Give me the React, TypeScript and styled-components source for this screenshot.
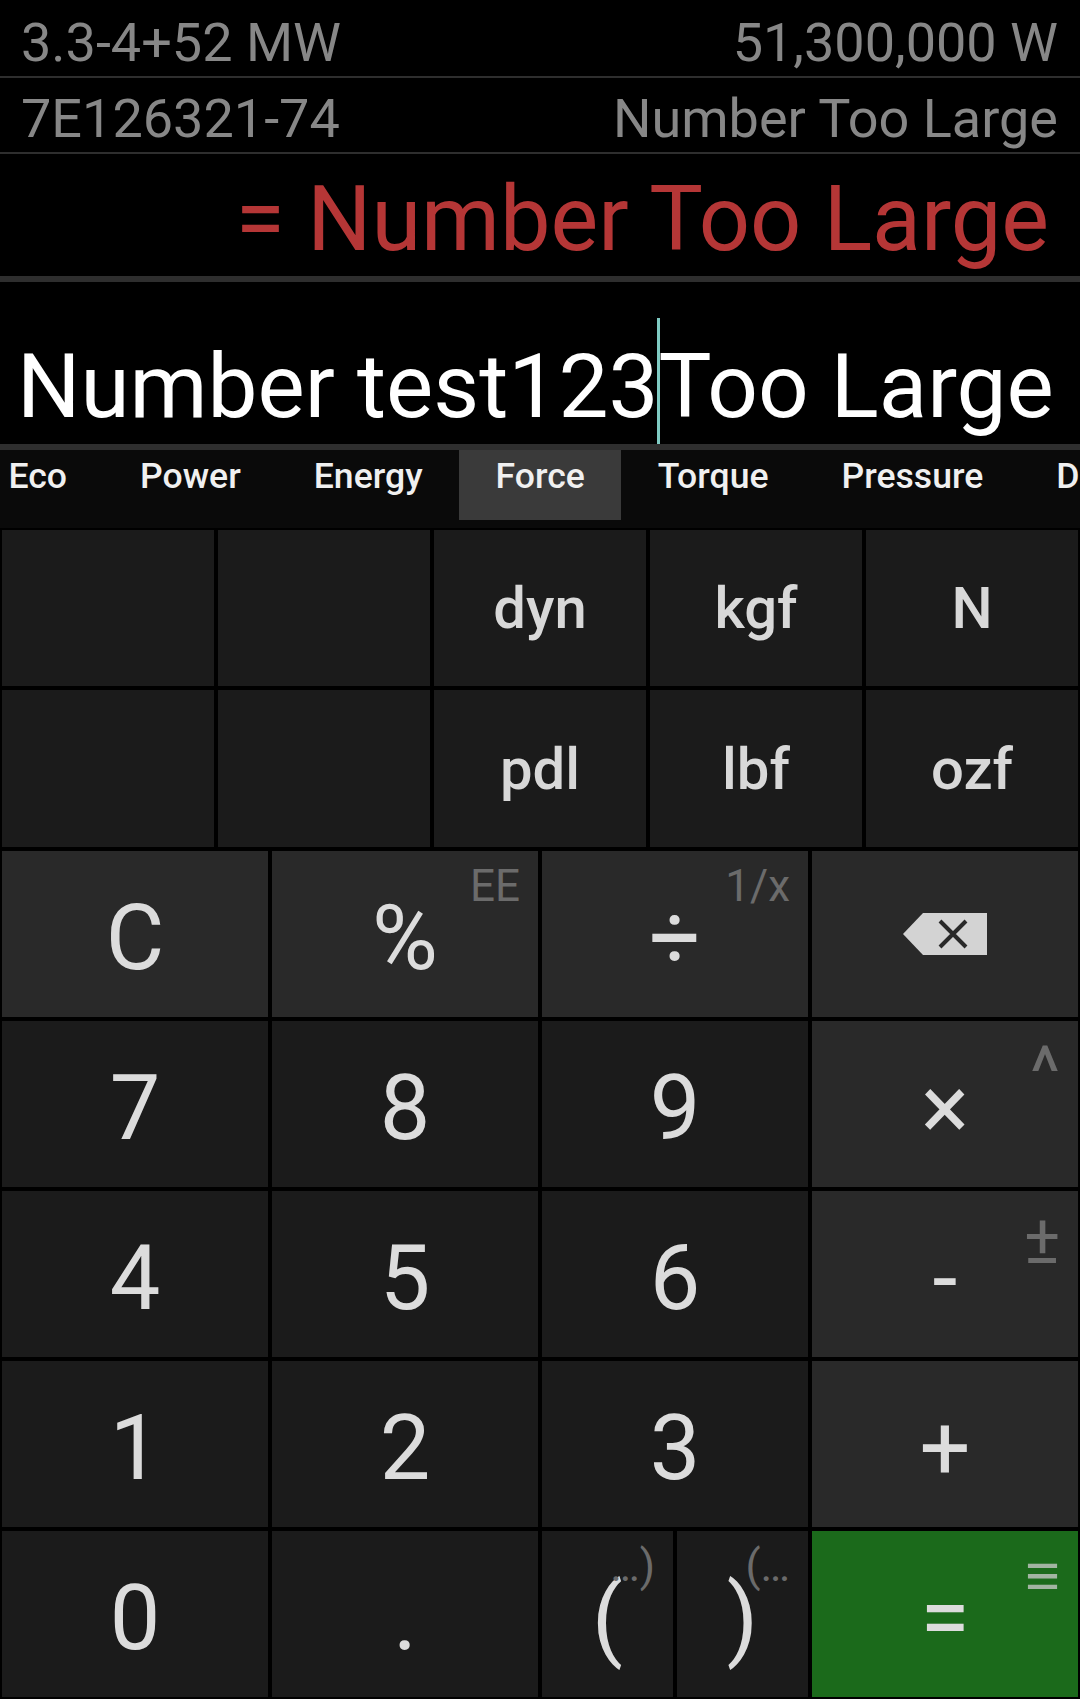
import styled, { createGlobalStyle } from "styled-components";

const GlobalStyle = createGlobalStyle`
  html, body {
    margin: 0;
    padding: 0;
    background: #000;
  }
  body {
    font-family: Roboto, "Noto Sans", "Liberation Sans", sans-serif;
  }
  * {
    box-sizing: border-box;
  }
`;

const Screen = styled.div`
  width: 1080px;
  height: 1699px;
  display: flex;
  flex-direction: column;
  background: #000;
  overflow: hidden;
`;

const HistoryRow = styled.div<{ $h: number; $top: number }>`
  height: ${props => props.$h}px;
  padding: ${props => props.$top}px 22px 0 21px;
  display: flex;
  justify-content: space-between;
  font-size: 54px;
  color: #878787;
  white-space: nowrap;
  flex-shrink: 0;
`;

const Divider = styled.div<{ $thick?: boolean }>`
  height: ${props => (props.$thick ? 6 : 2)}px;
  background: #2e2e2e;
  flex-shrink: 0;
`;

const Result = styled.div`
  height: 122px;
  padding: 13px 31px 0 0;
  text-align: right;
  font-size: 90px;
  color: #b53636;
  white-space: nowrap;
  flex-shrink: 0;
`;

const Input = styled.div`
  height: 162px;
  padding: 52px 0 0 17px;
  font-size: 89px;
  color: #fff;
  white-space: nowrap;
  overflow: hidden;
  flex-shrink: 0;
`;

const Caret = styled.span`
  position: relative;
  &::before {
    content: "";
    position: absolute;
    left: -1px;
    top: -16px;
    width: 3px;
    height: 126px;
    background: #7fcbc3;
  }
`;

const TabBar = styled.div`
  height: 78px;
  background: #0a0a0a;
  overflow: hidden;
  flex-shrink: 0;
`;

const TabStrip = styled.div`
  display: flex;
  margin-left: -28px;
`;

const Tab = styled.div<{ $active?: boolean }>`
  height: 70px;
  padding: 5px 36.5px 0;
  font-size: 35.6px;
  font-weight: 500;
  color: #f0f0f0;
  background: ${props => (props.$active ? "#3a3a3a" : "transparent")};
  white-space: nowrap;
  flex-shrink: 0;
`;

const Keypad = styled.div`
  flex: 1;
  min-height: 0;
  display: flex;
  flex-direction: column;
  gap: 4px;
  padding: 2px;
`;

const UnitGrid = styled.div`
  display: grid;
  grid-template-columns: repeat(5, 1fr);
  grid-template-rows: 156px 157px;
  gap: 4px;
`;

const UnitKey = styled.div`
  background: #1b1b1b;
  display: flex;
  align-items: center;
  justify-content: center;
  font-size: 58px;
  font-weight: 500;
  color: #d8d8d8;
`;

const MainGrid = styled.div`
  flex: 1;
  display: grid;
  grid-template-columns: repeat(4, 1fr);
  grid-template-rows: repeat(5, 1fr);
  gap: 4px;
`;

type Tone = "digit" | "op" | "equals";

const toneColors: Record<Tone, string> = {
  digit: "#1b1b1b",
  op: "#292929",
  equals: "#1b6a1b",
};

const Key = styled.div<{ $tone: Tone }>`
  position: relative;
  display: flex;
  align-items: center;
  justify-content: center;
  padding-top: 9px;
  background: ${props => toneColors[props.$tone]};
  color: #dcdcdc;
  font-size: 90px;
  min-width: 0;
`;

const Sup = styled.span<{ $onGreen?: boolean; $size?: number }>`
  position: absolute;
  top: 9px;
  right: 18px;
  font-size: ${props => props.$size ?? 44}px;
  color: ${props => (props.$onGreen ? "#a2b4a2" : "#6b6b6b")};
`;

const ParenPair = styled.div`
  display: grid;
  grid-template-columns: 1fr 1fr;
  gap: 4px;
`;

const BackspaceSvg = styled.svg`
  display: block;
  margin-top: -9px;
`;

const BackspaceIcon = () => (
  <BackspaceSvg width="84" height="42" viewBox="0 0 84 42">
    <path d="M20 0 H84 V42 H20 L0 21 Z" fill="#d3d3d3" />
    <path d="M37 8 L63 34 M63 8 L37 34" stroke="#292929" strokeWidth="4" />
  </BackspaceSvg>
);

const tabs = ["Eco", "Power", "Energy", "Force", "Torque", "Pressure", "Density"];
const units = ["", "", "dyn", "kgf", "N", "", "", "pdl", "lbf", "ozf"];

function App() {
  return (
    <>
      <GlobalStyle />
      <Screen>
        <HistoryRow $h={76} $top={11}>
          <span>3.3-4+52 MW</span>
          <span>51,300,000 W</span>
        </HistoryRow>
        <Divider />
        <HistoryRow $h={74} $top={9}>
          <span>7E126321-74</span>
          <span>Number Too Large</span>
        </HistoryRow>
        <Divider />
        <Result>= Number Too Large</Result>
        <Divider $thick />
        <Input>
          Number test123<Caret />Too Large
        </Input>
        <Divider $thick />
        <TabBar>
          <TabStrip>
            {tabs.map(t => (
              <Tab key={t} $active={t === "Force"}>{t}</Tab>
            ))}
          </TabStrip>
        </TabBar>
        <Keypad>
          <UnitGrid>
            {units.map((u, i) => (
              <UnitKey key={i}>{u}</UnitKey>
            ))}
          </UnitGrid>
          <MainGrid>
            <Key $tone="op">C</Key>
            <Key $tone="op">%<Sup>EE</Sup></Key>
            <Key $tone="op">÷<Sup>1/x</Sup></Key>
            <Key $tone="op"><BackspaceIcon /></Key>

            <Key $tone="digit">7</Key>
            <Key $tone="digit">8</Key>
            <Key $tone="digit">9</Key>
            <Key $tone="op">×<Sup $size={72}>^</Sup></Key>

            <Key $tone="digit">4</Key>
            <Key $tone="digit">5</Key>
            <Key $tone="digit">6</Key>
            <Key $tone="op">-<Sup $size={68}>±</Sup></Key>

            <Key $tone="digit">1</Key>
            <Key $tone="digit">2</Key>
            <Key $tone="digit">3</Key>
            <Key $tone="op">+</Key>

            <Key $tone="digit">0</Key>
            <Key $tone="digit">.</Key>
            <ParenPair>
              <Key $tone="digit">(<Sup>…)</Sup></Key>
              <Key $tone="digit">)<Sup>(…</Sup></Key>
            </ParenPair>
            <Key $tone="equals">=<Sup $onGreen $size={60}>≡</Sup></Key>
          </MainGrid>
        </Keypad>
      </Screen>
    </>
  );
}

export default App;
